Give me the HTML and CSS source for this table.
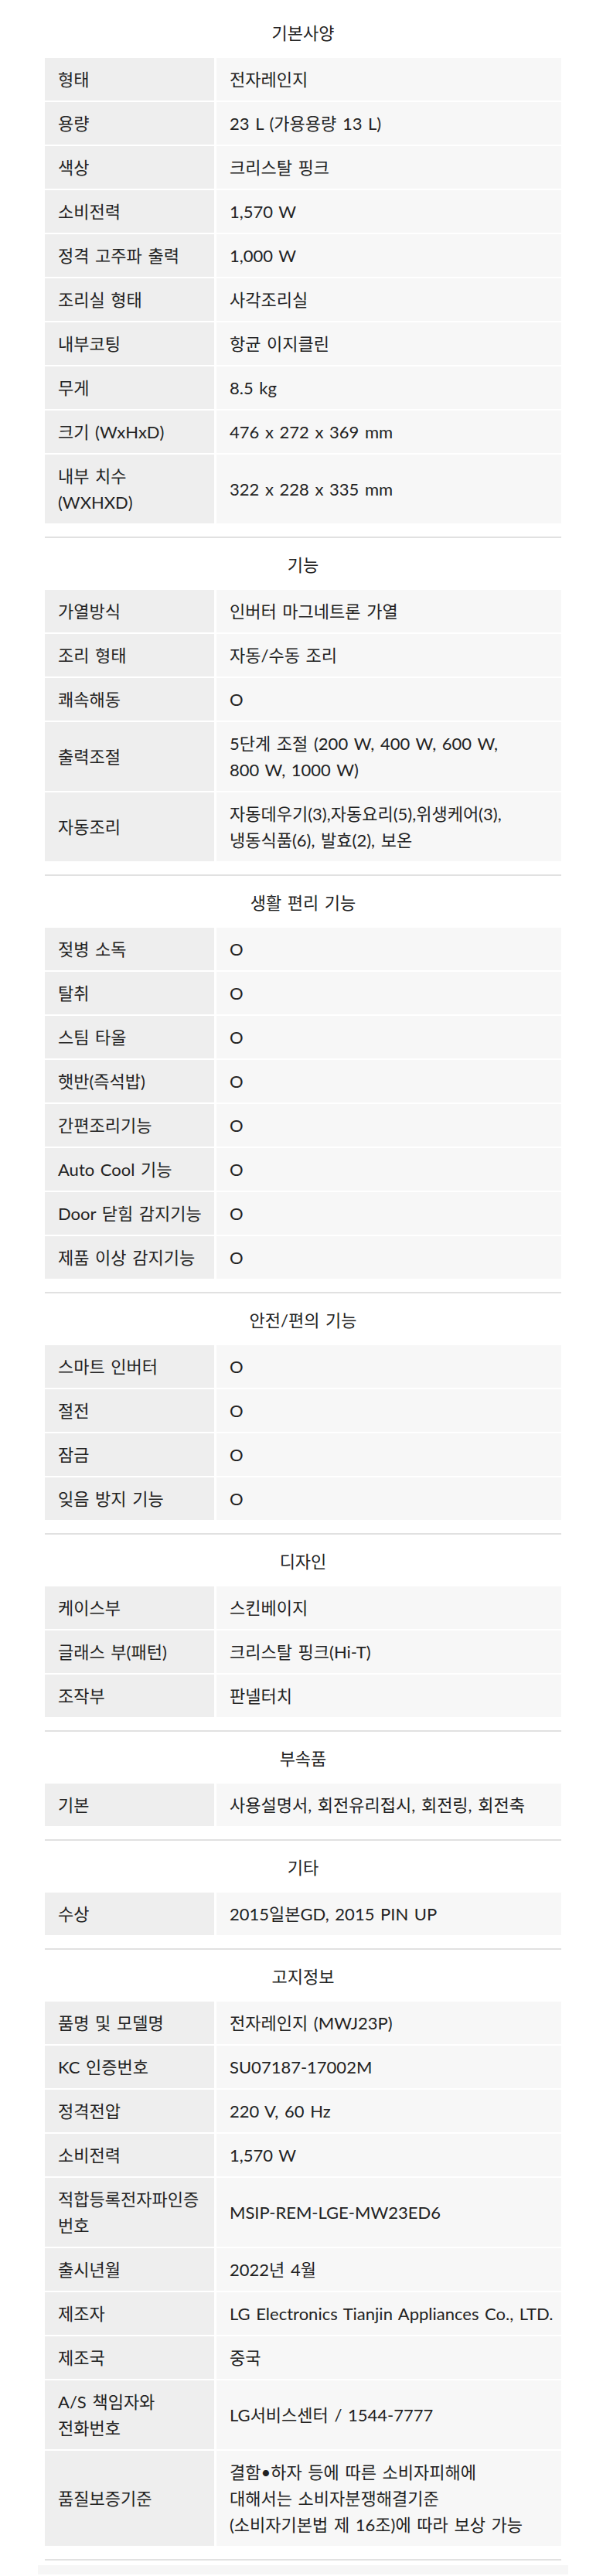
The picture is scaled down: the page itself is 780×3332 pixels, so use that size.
FILE: index.html
```html
<!DOCTYPE html>
<html lang="ko">
<head>
<meta charset="utf-8">
<title>제품 사양</title>
<link rel="stylesheet" href="styles.css">
</head>
<body>
<main class="specs">
  <section class="spec">
    <h2 class="spec-title">기본사양</h2>
    <div class="spec-table">
      <div class="spec-label">형태</div><div class="spec-value">전자레인지</div>
      <div class="spec-label">용량</div><div class="spec-value">23 L (가용용량 13 L)</div>
      <div class="spec-label">색상</div><div class="spec-value">크리스탈 핑크</div>
      <div class="spec-label">소비전력</div><div class="spec-value">1,570 W</div>
      <div class="spec-label">정격 고주파 출력</div><div class="spec-value">1,000 W</div>
      <div class="spec-label">조리실 형태</div><div class="spec-value">사각조리실</div>
      <div class="spec-label">내부코팅</div><div class="spec-value">항균 이지클린</div>
      <div class="spec-label">무게</div><div class="spec-value">8.5 kg</div>
      <div class="spec-label">크기 (WxHxD)</div><div class="spec-value">476 x 272 x 369 mm</div>
      <div class="spec-label"><span>내부 치수<br>(WXHXD)</span></div><div class="spec-value">322 x 228 x 335 mm</div>
    </div>
  </section>

  <section class="spec">
    <h2 class="spec-title">기능</h2>
    <div class="spec-table">
      <div class="spec-label">가열방식</div><div class="spec-value">인버터 마그네트론 가열</div>
      <div class="spec-label">조리 형태</div><div class="spec-value">자동/수동 조리</div>
      <div class="spec-label">쾌속해동</div><div class="spec-value">O</div>
      <div class="spec-label">출력조절</div><div class="spec-value"><span>5단계 조절 (200 W, 400 W, 600 W,<br>800 W, 1000 W)</span></div>
      <div class="spec-label">자동조리</div><div class="spec-value"><span>자동데우기(3),자동요리(5),위생케어(3),<br>냉동식품(6), 발효(2), 보온</span></div>
    </div>
  </section>

  <section class="spec">
    <h2 class="spec-title">생활 편리 기능</h2>
    <div class="spec-table">
      <div class="spec-label">젖병 소독</div><div class="spec-value">O</div>
      <div class="spec-label">탈취</div><div class="spec-value">O</div>
      <div class="spec-label">스팀 타올</div><div class="spec-value">O</div>
      <div class="spec-label">햇반(즉석밥)</div><div class="spec-value">O</div>
      <div class="spec-label">간편조리기능</div><div class="spec-value">O</div>
      <div class="spec-label">Auto Cool 기능</div><div class="spec-value">O</div>
      <div class="spec-label">Door 닫힘 감지기능</div><div class="spec-value">O</div>
      <div class="spec-label">제품 이상 감지기능</div><div class="spec-value">O</div>
    </div>
  </section>

  <section class="spec">
    <h2 class="spec-title">안전/편의 기능</h2>
    <div class="spec-table">
      <div class="spec-label">스마트 인버터</div><div class="spec-value">O</div>
      <div class="spec-label">절전</div><div class="spec-value">O</div>
      <div class="spec-label">잠금</div><div class="spec-value">O</div>
      <div class="spec-label">잊음 방지 기능</div><div class="spec-value">O</div>
    </div>
  </section>

  <section class="spec">
    <h2 class="spec-title">디자인</h2>
    <div class="spec-table">
      <div class="spec-label">케이스부</div><div class="spec-value">스킨베이지</div>
      <div class="spec-label">글래스 부(패턴)</div><div class="spec-value">크리스탈 핑크(Hi-T)</div>
      <div class="spec-label">조작부</div><div class="spec-value">판넬터치</div>
    </div>
  </section>

  <section class="spec">
    <h2 class="spec-title">부속품</h2>
    <div class="spec-table">
      <div class="spec-label">기본</div><div class="spec-value">사용설명서, 회전유리접시, 회전링, 회전축</div>
    </div>
  </section>

  <section class="spec">
    <h2 class="spec-title">기타</h2>
    <div class="spec-table">
      <div class="spec-label">수상</div><div class="spec-value">2015일본GD, 2015 PIN UP</div>
    </div>
  </section>

  <section class="spec">
    <h2 class="spec-title">고지정보</h2>
    <div class="spec-table">
      <div class="spec-label">품명 및 모델명</div><div class="spec-value">전자레인지 (MWJ23P)</div>
      <div class="spec-label">KC 인증번호</div><div class="spec-value">SU07187-17002M</div>
      <div class="spec-label">정격전압</div><div class="spec-value">220 V, 60 Hz</div>
      <div class="spec-label">소비전력</div><div class="spec-value">1,570 W</div>
      <div class="spec-label">적합등록전자파인증번호</div><div class="spec-value">MSIP-REM-LGE-MW23ED6</div>
      <div class="spec-label">출시년월</div><div class="spec-value">2022년 4월</div>
      <div class="spec-label">제조자</div><div class="spec-value">LG Electronics Tianjin Appliances Co., LTD.</div>
      <div class="spec-label">제조국</div><div class="spec-value">중국</div>
      <div class="spec-label">A/S 책임자와 전화번호</div><div class="spec-value">LG서비스센터 / 1544-7777</div>
      <div class="spec-label">품질보증기준</div><div class="spec-value"><span>결함•하자 등에 따른 소비자피해에<br>대해서는 소비자분쟁해결기준<br>(소비자기본법 제 16조)에 따라 보상 가능</span></div>
    </div>
  </section>
  <div class="spec-end"></div>
</main>
<div class="after-box"></div>
</body>
</html>
```

FILE: styles.css
```css
html, body {
  margin: 0;
  padding: 0;
  background: #ffffff;
}

body {
  font-family: Lato, "Liberation Sans", "Noto Sans CJK KR", sans-serif;
  font-size: 22px;
  color: #222222;
  padding-top: 8px;
  word-spacing: 2px;
}

.specs {
  width: 668px;
  margin-left: 58px;
}

.spec {
  padding: 19px 0 17px;
}

.spec + .spec,
.spec-end {
  border-top: 2px solid #e1e1e1;
}

.spec-title {
  margin: 0 0 16px;
  font-size: 22px;
  font-weight: 400;
  line-height: 32px;
  text-align: center;
}

.spec-table {
  display: grid;
  grid-template-columns: 219px 1fr;
  column-gap: 3px;
  row-gap: 2px;
}

.spec-label,
.spec-value {
  display: flex;
  align-items: center;
  min-height: 34px;
  line-height: 34px;
  padding-top: 10.5px;
  padding-bottom: 10.5px;
  word-break: keep-all;
  overflow-wrap: anywhere;
}

.spec-label {
  background: #eeeeee;
  padding-left: 17px;
  padding-right: 2px;
}

.spec-value {
  background: #f7f7f7;
  padding-left: 17px;
  padding-right: 8px;
}

.after-box {
  width: 686px;
  height: 12px;
  margin: 6px 0 0 49px;
  background: #f6f6f6;
}
```
